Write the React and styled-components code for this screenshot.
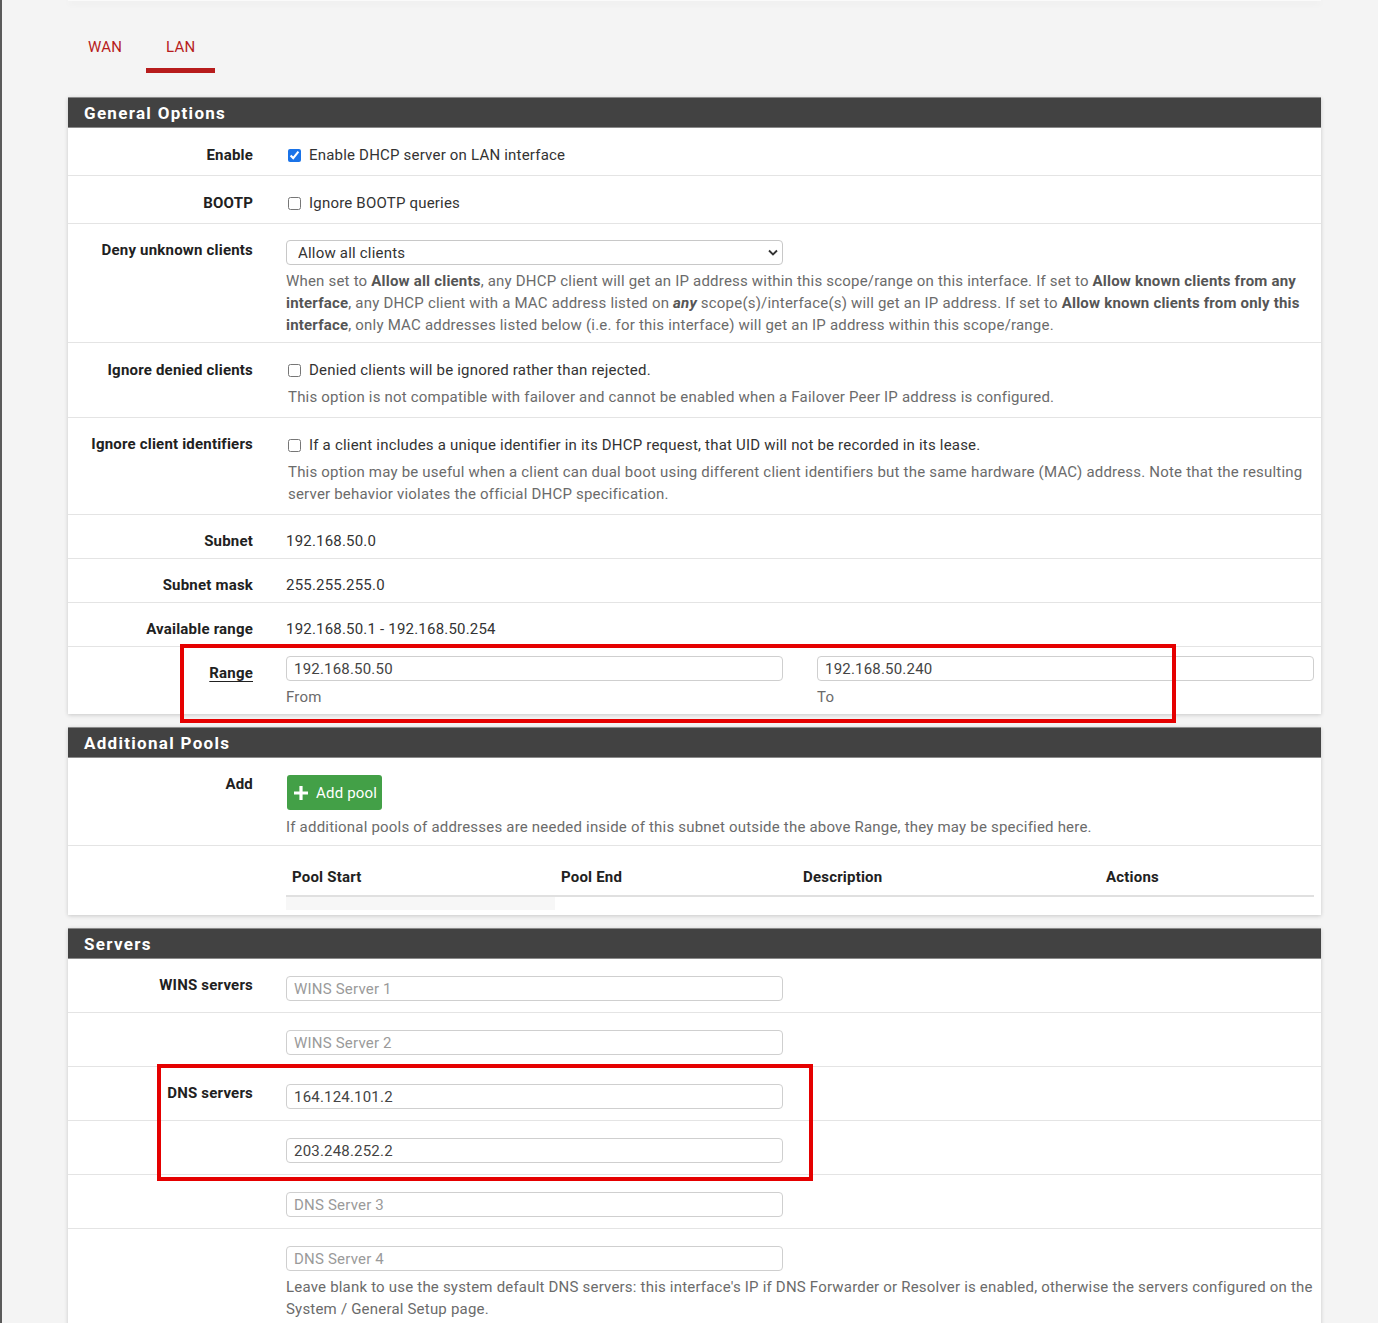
import React from "react";
import styled, { createGlobalStyle } from "styled-components";

const GlobalStyle = createGlobalStyle`
  html, body {
    margin: 0;
    padding: 0;
  }
  body {
    background: #f4f4f4;
    border-left: 2px solid #5a5a5a;
    font-family: Roboto, "Liberation Sans", Arial, sans-serif;
    font-size: 15px;
    letter-spacing: 0.2px;
    color: #212121;
  }
`;

const Page = styled.div`
  position: relative;
  width: 1253px;
  margin-left: 66px;
  padding-bottom: 40px;
`;

const TopEdge = styled.div`
  height: 1px;
  background: #fafafa;
  box-shadow: 0 2px 7px rgba(0, 0, 0, 0.12);
`;

const Tabs = styled.div`
  display: flex;
  gap: 4px;
  padding-top: 23px;
  margin-bottom: 24px;
`;

const Tab = styled.div`
  padding: 12px 20px 10px;
  line-height: 22px;
  color: #b71c1c;
  border-bottom: 5px solid ${(p) => (p.$active ? "#b71c1c" : "transparent")};
`;

const Panel = styled.section`
  background: #fff;
  box-shadow: 0 1px 4px rgba(0, 0, 0, 0.18);
  margin-bottom: 13px;
`;

const PanelHeading = styled.h2`
  margin: 0;
  height: 31px;
  line-height: 30px;
  padding: 0 16px;
  background: #424242;
  border: 1px solid #8a8a8a;
  border-width: 1px 0 1px 0;
  box-sizing: border-box;
  color: #fff;
  font-size: 17px;
  font-weight: 700;
  letter-spacing: 1.3px;
`;

const Row = styled.div`
  display: grid;
  grid-template-columns: 185px 1fr;
  column-gap: 33px;
  padding: 0 7px ${(p) => p.$bottom ?? 6}px 0;
  & + & {
    border-top: 1px solid #e4e4e4;
  }
`;

const Label = styled.div`
  text-align: right;
  font-weight: 700;
  line-height: 22px;
  padding-top: ${(p) => p.$top ?? 15}px;
  text-decoration: ${(p) => (p.$underline ? "underline" : "none")};
  text-underline-offset: 3px;
`;

const Content = styled.div`
  padding-top: ${(p) => p.$top ?? 16}px;
  min-width: 0;
`;

const CheckLine = styled.label`
  display: flex;
  align-items: center;
  height: 22px;
  line-height: 22px;
  color: #333;
`;

const Check = styled.input.attrs({ type: "checkbox" })`
  width: 13px;
  height: 13px;
  margin: 1px 8px 0 2px;
  accent-color: #1a73e8;
`;

const Help = styled.div`
  margin-top: ${(p) => p.$gap ?? 5}px;
  padding-left: ${(p) => p.$indent ?? 0}px;
  color: #6b6b6b;
  line-height: 22px;
  b {
    color: #555;
  }
`;

const Static = styled.div`
  line-height: 22px;
  color: #333;
`;

const SelectWrap = styled.div`
  position: relative;
  width: 497px;
`;

const Select = styled.select`
  display: block;
  appearance: none;
  width: 100%;
  height: 25px;
  padding: 0 11px;
  border: 1px solid #c8c8c8;
  border-radius: 4px;
  background: #fff;
  font: inherit;
  letter-spacing: 0.2px;
  color: #333;
`;

const Chevron = styled.svg`
  position: absolute;
  right: 5px;
  top: 9px;
  pointer-events: none;
`;

const Input = styled.input`
  display: block;
  width: 497px;
  height: 25px;
  box-sizing: border-box;
  padding: 0 7px;
  border: 1px solid #cfcfcf;
  border-radius: 4px;
  background: #fff;
  font: inherit;
  letter-spacing: 0.2px;
  color: #444;
  &::placeholder {
    color: #9a9a9a;
  }
`;

const Pair = styled.div`
  display: grid;
  grid-template-columns: 497px 497px;
  column-gap: 34px;
`;

const Field = styled.div`
  display: flex;
  flex-direction: column;
`;

const Button = styled.button`
  display: flex;
  width: max-content;
  align-items: center;
  gap: 7px;
  height: 35px;
  padding: 0 5px 0 6px;
  margin-left: 1px;
  border: none;
  border-radius: 3px;
  background: #43a047;
  color: #fff;
  font: inherit;
  font-size: 15px;
  letter-spacing: 0.2px;
`;

const Table = styled.table`
  width: 100%;
  border-collapse: collapse;
  th {
    text-align: left;
    font-weight: 700;
    line-height: 20px;
    padding: 8px 6px;
    border-bottom: 2px solid #e0e0e0;
  }
  td {
    height: 13px;
    padding: 0;
  }
`;

const Stripe = styled.td`
  background: #f7f7f7;
`;

const Callout = styled.div`
  position: absolute;
  box-sizing: border-box;
  border: 4px solid #e50000;
  pointer-events: none;
`;

const servers = [
  { label: "WINS servers", placeholder: "WINS Server 1" },
  { placeholder: "WINS Server 2" },
  { label: "DNS servers", value: "164.124.101.2" },
  { value: "203.248.252.2" },
  { placeholder: "DNS Server 3" },
];

export default function App() {
  return (
    <>
      <GlobalStyle />
      <Page>
        <TopEdge />
        <Tabs>
          <Tab>WAN</Tab>
          <Tab $active>LAN</Tab>
        </Tabs>

        <Panel>
          <PanelHeading>General Options</PanelHeading>
          <Row $bottom={9}>
            <Label $top={16}>Enable</Label>
            <Content>
              <CheckLine>
                <Check defaultChecked />
                Enable DHCP server on LAN interface
              </CheckLine>
            </Content>
          </Row>
          <Row $bottom={9}>
            <Label $top={16}>BOOTP</Label>
            <Content>
              <CheckLine>
                <Check />
                Ignore BOOTP queries
              </CheckLine>
            </Content>
          </Row>
          <Row>
            <Label>Deny unknown clients</Label>
            <Content>
              <SelectWrap>
                <Select defaultValue="all">
                  <option value="all">Allow all clients</option>
                  <option value="any">Allow known clients from any interface</option>
                  <option value="this">Allow known clients from only this interface</option>
                </Select>
                <Chevron width="10" height="8" viewBox="0 0 10 8">
                  <path d="M1 1.5 5 5.5 9 1.5" fill="none" stroke="#333" strokeWidth="1.8" />
                </Chevron>
              </SelectWrap>
              <Help>
                When set to <b>Allow all clients</b>, any DHCP client will get an IP address within
                this scope/range on this interface. If set to <b>Allow known clients from any
                interface</b>, any DHCP client with a MAC address listed on <b><i>any</i></b>{" "}
                scope(s)/interface(s) will get an IP address. If set to <b>Allow known clients from
                only this interface</b>, only MAC addresses listed below (i.e. for this interface)
                will get an IP address within this scope/range.
              </Help>
            </Content>
          </Row>
          <Row $bottom={9}>
            <Label $top={16}>Ignore denied clients</Label>
            <Content>
              <CheckLine>
                <Check />
                Denied clients will be ignored rather than rejected.
              </CheckLine>
              <Help $indent={2}>
                This option is not compatible with failover and cannot be enabled when a Failover
                Peer IP address is configured.
              </Help>
            </Content>
          </Row>
          <Row $bottom={9}>
            <Label $top={15}>Ignore client identifiers</Label>
            <Content>
              <CheckLine>
                <Check />
                If a client includes a unique identifier in its DHCP request, that UID will not be
                recorded in its lease.
              </CheckLine>
              <Help $indent={2}>
                This option may be useful when a client can dual boot using different client
                identifiers but the same hardware (MAC) address. Note that the resulting server
                behavior violates the official DHCP specification.
              </Help>
            </Content>
          </Row>
          <Row>
            <Label>Subnet</Label>
            <Content $top={15}>
              <Static>192.168.50.0</Static>
            </Content>
          </Row>
          <Row>
            <Label>Subnet mask</Label>
            <Content $top={15}>
              <Static>255.255.255.0</Static>
            </Content>
          </Row>
          <Row>
            <Label>Available range</Label>
            <Content $top={15}>
              <Static>192.168.50.1 - 192.168.50.254</Static>
            </Content>
          </Row>
          <Row>
            <Label $underline>Range</Label>
            <Content $top={9}>
              <Pair>
                <Field>
                  <Input defaultValue="192.168.50.50" />
                  <Help>From</Help>
                </Field>
                <Field>
                  <Input defaultValue="192.168.50.240" />
                  <Help>To</Help>
                </Field>
              </Pair>
            </Content>
          </Row>
        </Panel>

        <Panel>
          <PanelHeading>Additional Pools</PanelHeading>
          <Row $bottom={7}>
            <Label>Add</Label>
            <Content $top={17}>
              <Button>
                <svg width="16" height="16" viewBox="0 0 16 16">
                  <path d="M8 1v14M1 8h14" stroke="#fff" strokeWidth="3.2" />
                </svg>
                Add pool
              </Button>
              <Help $gap={6}>
                If additional pools of addresses are needed inside of this subnet outside the above
                Range, they may be specified here.
              </Help>
            </Content>
          </Row>
          <Row $bottom={5}>
            <div />
            <Content $top={13}>
              <Table>
                <thead>
                  <tr>
                    <th style={{ width: 257 }}>Pool Start</th>
                    <th style={{ width: 230 }}>Pool End</th>
                    <th style={{ width: 291 }}>Description</th>
                    <th>Actions</th>
                  </tr>
                </thead>
                <tbody>
                  <tr>
                    <Stripe />
                    <td />
                    <td />
                    <td />
                  </tr>
                </tbody>
              </Table>
            </Content>
          </Row>
        </Panel>

        <Panel>
          <PanelHeading>Servers</PanelHeading>
          {servers.map((s, i) => (
            <Row key={i} $bottom={11}>
              <Label>{s.label || ""}</Label>
              <Content $top={17}>
                <Input defaultValue={s.value} placeholder={s.placeholder} />
              </Content>
            </Row>
          ))}
          <Row $bottom={10}>
            <div />
            <Content $top={17}>
              <Input placeholder="DNS Server 4" />
              <Help>
                Leave blank to use the system default DNS servers: this interface's IP if DNS
                Forwarder or Resolver is enabled, otherwise the servers configured on the System /
                General Setup page.
              </Help>
            </Content>
          </Row>
        </Panel>

        <Callout style={{ left: 112, top: 644, width: 996, height: 79 }} />
        <Callout style={{ left: 89, top: 1064, width: 656, height: 117 }} />
      </Page>
    </>
  );
}
